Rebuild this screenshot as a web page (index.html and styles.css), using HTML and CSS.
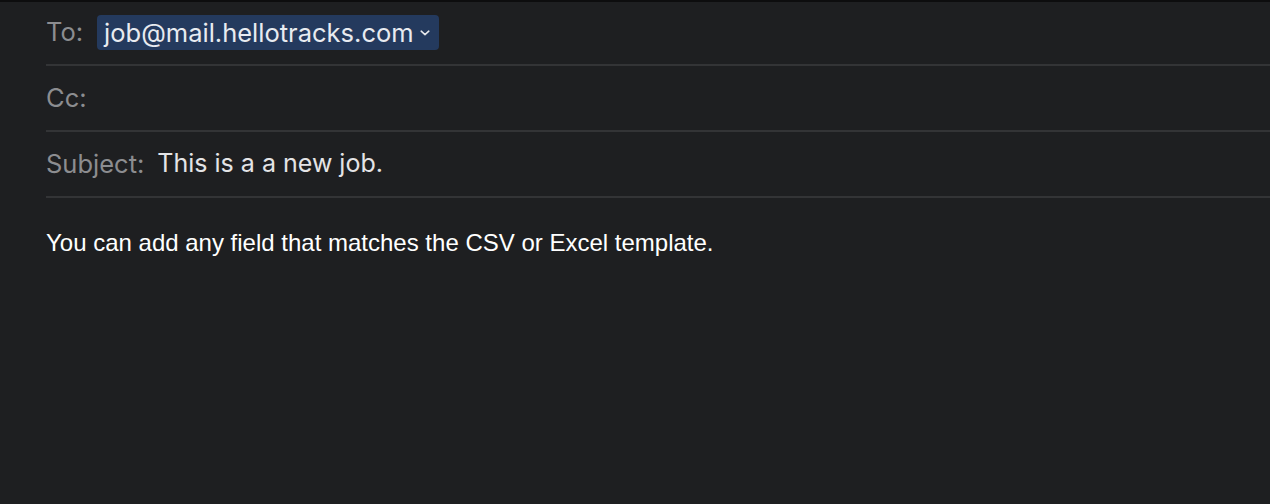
FILE: index.html
```html
<!DOCTYPE html>
<html>
<head>
<meta charset="utf-8">
<link rel="stylesheet" href="styles.css">
</head>
<body>
<div class="compose">
  <div class="field first">
    <span class="label">To:</span>
    <span class="token">job@mail.hellotracks.com<svg class="chev" width="10" height="6" viewBox="0 0 10 6"><path d="M1.2 1.2 L5 4.6 L8.8 1.2" fill="none" stroke="#e6e8ec" stroke-width="1.6" stroke-linecap="round" stroke-linejoin="round"/></svg></span>
  </div>
  <div class="field">
    <span class="label">Cc:</span>
  </div>
  <div class="field">
    <span class="label">Subject:</span>
    <span class="value">This is a a new job.</span>
  </div>
  <div class="body">You can add any field that matches the CSV or Excel template.</div>
</div>
</body>
</html>
```

FILE: styles.css
```css
html, body {
  margin: 0;
  padding: 0;
  background: #1e1f21;
  height: 100%;
}
.compose {
  border-top: 2px solid #0d0d0e;
  padding-left: 46px;
  font-family: Inter, "Liberation Sans", sans-serif;
}
.field {
  height: 64px;
  border-bottom: 2px solid #333436;
  display: flex;
  align-items: center;
  gap: 13px;
}
.field.first {
  height: 64px;
  gap: 14px;
  padding-bottom: 2px;
  box-sizing: border-box;
}
.label {
  color: #8c8d90;
  font-size: 25.5px;
  margin-top: -2px;
}
.token {
  display: inline-flex;
  align-items: center;
  background: #243a5e;
  color: #e8ebf0;
  font-size: 25.5px;
  height: 35px;
  padding: 0 9px 0 7px;
  border-radius: 4px;
  gap: 6px;
}
.chev {
  margin-top: 2px;
}
.value {
  color: #e4e4e6;
  font-size: 25px;
  margin-top: -2px;
}
.body {
  padding-top: 31px;
  color: #ffffff;
  font-family: "Liberation Sans", Arial, sans-serif;
  font-size: 24px;
}
```
